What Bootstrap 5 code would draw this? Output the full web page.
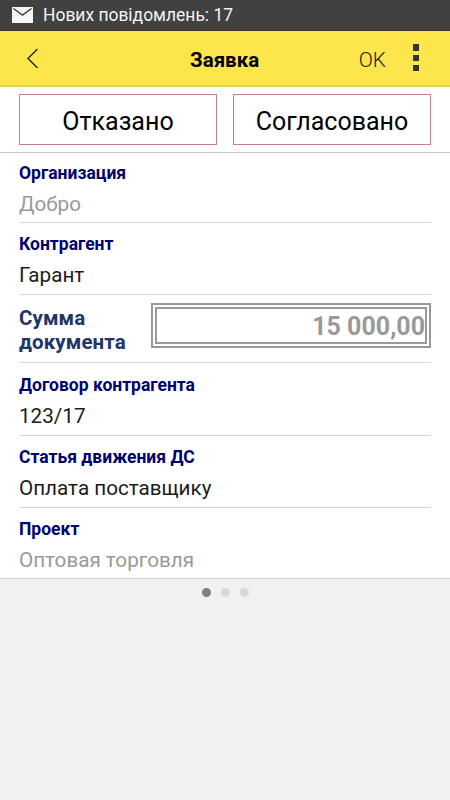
<!DOCTYPE html>
<html lang="uk"><head><meta charset="utf-8"><meta name="viewport" content="width=device-width, initial-scale=1"><title>Заявка</title>
<link href="https://cdn.jsdelivr.net/npm/bootstrap@5.3.0/dist/css/bootstrap.min.css" rel="stylesheet">
<style>
body{font-family:Roboto,"Noto Sans",sans-serif;background:#f1f1f1;min-height:800px;overflow:hidden}
.status-strip{height:31px;padding-left:12px;gap:10px;background:#414141;color:#f4f4f4;font-size:17.45px;line-height:30px;border-bottom:1px solid #36332a}
.title-strip{height:56px;padding:0 30px 0 26px;background:#fde64b;border-bottom:2px solid #dfd060;color:#000}
.title-strip h1{font-size:20.5px;line-height:24px;margin:4px 0 0 150px}
.ok-link{font-size:20.8px;line-height:24px;color:#222;font-weight:300;margin:4px 27px 0 auto}
.choice-strip{height:66px;padding:7px 19px 0;gap:16px;border-bottom:1px solid #c4c8cc}
.choice{height:51px;border:1px solid #c77e8b;border-radius:0;font-size:25px;line-height:53px;padding:0;color:#000}
.field{height:72px;margin:0 19px;padding-top:11px;border-bottom:1px solid #d5d5d5}
.field-first{height:70px;padding-top:10px}
.field-sum{height:68px;padding-top:8px}
.field-deal{height:73px;padding-top:12px}
.field-last{height:70px;border-bottom:0}
.form-sheet{border-bottom:1px solid #d0d0d0}
.field-name{font-size:17.5px;line-height:20px;font-weight:700;color:#00006e}
.field-value{font-size:20.65px;line-height:24px;margin-top:9px;color:#1c1c1c}
.field-value.faded{color:#999}
.sum-name{font-size:20.5px;line-height:24px;padding-top:3px;font-weight:700;letter-spacing:.1px;color:#233468}
.sum-box{width:280px;height:45px;border:2px solid #999;padding:2px}
.sum-inner{border:2px solid #999;height:100%;font-size:25px;line-height:36px;font-weight:700;color:#999}
.dots{gap:10px;padding-top:9px}
.dot{width:9px;height:9px;border-radius:50%;background:#d9d9d9}
.dot.on{background:#808080}
</style></head><body>
<header>
<div class="status-strip d-flex align-items-center">
<svg width="21" height="16" viewBox="0 0 21 16"><path d="M0 0H21V16H0Z" fill="#f5f5f5"/><path d="M1.500 1.500L10.500 8L19.500 1.500" fill="none" stroke="#414141" stroke-width="1.500"/></svg>
<span>Нових повідомлень: 17</span></div>
<nav class="title-strip d-flex align-items-center">
<svg width="14" height="20" viewBox="0 0 14 20"><path d="M11.500 1L2 10.500L11.500 20" fill="none" stroke="#222" stroke-width="1.400"/></svg>
<h1 class="fw-bold">Заявка</h1><span class="ok-link">OK</span>
<svg width="7" height="28" viewBox="0 0 7 28"><path d="M0 0h6v7h-6zM0 11h6v6h-6zM0 21h6v6h-6z" fill="#333"/></svg></nav>
</header>
<main class="form-sheet bg-white">
<div class="choice-strip d-flex"><button class="btn choice w-50">Отказано</button><button class="btn choice w-50">Согласовано</button></div>
<div class="field field-first"><div class="field-name">Организация</div><div class="field-value faded">Добро</div></div>
<div class="field"><div class="field-name">Контрагент</div><div class="field-value">Гарант</div></div>
<div class="field field-sum d-flex justify-content-between"><div class="sum-name">Сумма<br>документа</div><div class="sum-box"><div class="sum-inner text-end">15 000,00</div></div></div>
<div class="field field-deal"><div class="field-name">Договор контрагента</div><div class="field-value">123/17</div></div>
<div class="field"><div class="field-name">Статья движения ДС</div><div class="field-value">Оплата поставщику</div></div>
<div class="field field-last"><div class="field-name">Проект</div><div class="field-value faded">Оптовая торговля</div></div>
</main>
<div class="dots d-flex justify-content-center"><i class="dot on"></i><i class="dot"></i><i class="dot"></i></div>
<script src="https://cdn.jsdelivr.net/npm/bootstrap@5.3.0/dist/js/bootstrap.bundle.min.js"></script>
</body></html>
